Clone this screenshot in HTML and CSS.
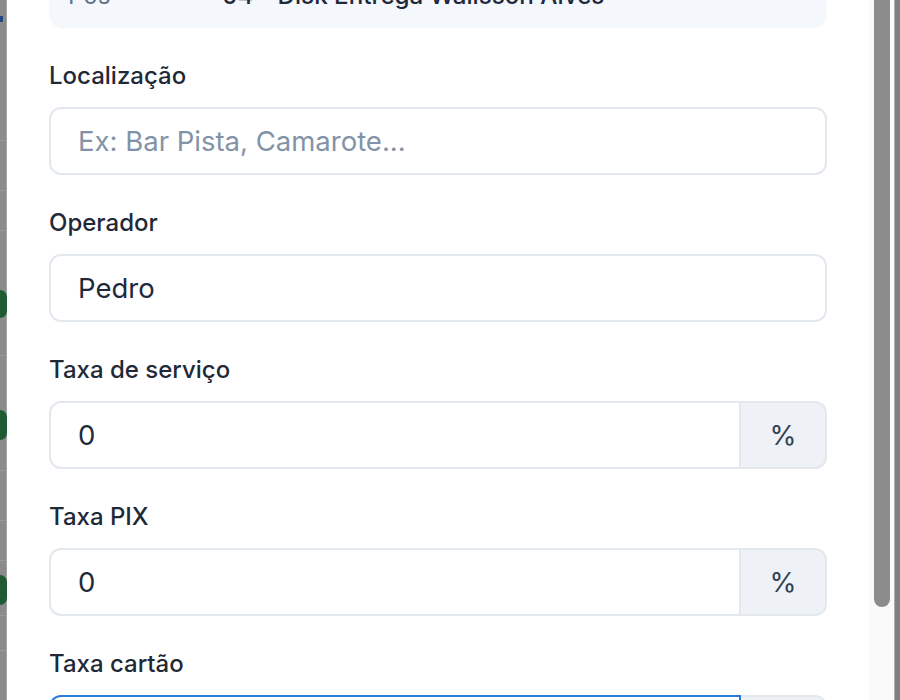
FILE: index.html
```html
<!DOCTYPE html>
<html lang="pt-BR">
<head>
<meta charset="utf-8">
<title>Configurar PDV</title>
<link rel="stylesheet" href="styles.css">
</head>
<body>
  <div class="backdrop-left">
    <span class="bd-dot"></span>
    <span class="bd-line l1"></span>
    <span class="bd-line l2"></span>
    <span class="bd-line l3"></span>
    <span class="bd-blob b1"></span>
    <span class="bd-line l4"></span>
    <span class="bd-blob b2"></span>
    <span class="bd-line l5"></span>
    <span class="bd-line l6"></span>
    <span class="bd-line l7"></span>
    <span class="bd-blob b3"></span>
    <span class="bd-line l8"></span>
    <span class="bd-line l9"></span>
  </div>
  <div class="modal">
    <div class="modal-body">
      <div class="info-box">
        <span class="info-key">Pos</span>
        <span class="info-value">04 - Disk Entrega Walisson Alves</span>
      </div>

      <div class="field">
        <label class="label" for="loc">Localização</label>
        <input class="input" id="loc" type="text" placeholder="Ex: Bar Pista, Camarote...">
      </div>

      <div class="field">
        <label class="label" for="op">Operador</label>
        <input class="input" id="op" type="text" value="Pedro">
      </div>

      <div class="field">
        <label class="label" for="ts">Taxa de serviço</label>
        <div class="group">
          <input class="input input-grouped" id="ts" type="text" value="0">
          <span class="addon">%</span>
        </div>
      </div>

      <div class="field">
        <label class="label" for="tp">Taxa PIX</label>
        <div class="group">
          <input class="input input-grouped" id="tp" type="text" value="0">
          <span class="addon">%</span>
        </div>
      </div>

      <div class="field">
        <label class="label" for="tc">Taxa cartão</label>
        <div class="group">
          <input class="input input-grouped input-focus" id="tc" type="text" value="0">
          <span class="addon">%</span>
        </div>
      </div>
    </div>
    <div class="scroll-track">
      <div class="scroll-thumb"></div>
    </div>
  </div>
  <div class="backdrop-right"></div>
</body>
</html>
```

FILE: styles.css
```css
html, body {
  margin: 0;
  padding: 0;
  height: 700px;
  overflow: hidden;
}

body {
  display: flex;
  font-family: Inter, "Noto Sans", "Liberation Sans", sans-serif;
  background: #8a8a8a;
}

.backdrop-left {
  width: 7px;
  flex: none;
  display: flex;
  flex-direction: column;
  background: #8b8b8b;
  border-right: 1px solid #a3a3a3;
  box-sizing: border-box;
}

.bd-dot {
  display: block;
  width: 3px;
  height: 6px;
  margin-top: 16px;
  background: #23487a;
}

.bd-line {
  display: block;
  height: 1px;
  background: #9a9a9a;
}

.l1 { margin-top: 118px; }
.l2 { margin-top: 49px; }
.l3 { margin-top: 39px; }
.l4 { margin-top: 37px; }
.l5 { margin-top: 30px; }
.l6 { margin-top: 49px; }
.l7 { margin-top: 39px; }
.l8 { margin-top: 10px; }
.l9 { margin-top: 34px; }

.bd-blob {
  display: block;
  width: 7px;
  height: 28px;
  background: #1f5a33;
  border-radius: 0 8px 8px 0;
}

.b1 { margin-top: 59px; }
.b2 { margin-top: 54px; height: 30px; }
.b3 { margin-top: 14px; height: 30px; }

.modal {
  flex: 1;
  display: flex;
  background: #ffffff;
}

.modal-body {
  flex: 1;
  padding: 0 42px;
}

.info-box {
  margin-top: -32px;
  height: 60px;
  box-sizing: border-box;
  padding: 0 19px 4px;
  background: #f4f7fb;
  border-radius: 0 0 14px 14px;
  display: flex;
  align-items: center;
  font-size: 24.2px;
  line-height: 36px;
}

.info-key {
  width: 154px;
  color: #64748b;
}

.info-value {
  color: #1e293b;
  font-weight: 500;
}

.field {
  margin-top: 32px;
}

.label {
  display: block;
  font-size: 24px;
  font-weight: 500;
  line-height: 32px;
  color: #1f2937;
  margin-bottom: 15px;
}

.input {
  display: block;
  width: 100%;
  height: 68px;
  box-sizing: border-box;
  border: 2px solid #e3e8ef;
  border-radius: 12px;
  padding: 0 27px;
  font-family: inherit;
  font-size: 27.5px;
  color: #1e293b;
  background: #ffffff;
  outline: none;
}

.input::placeholder {
  color: #8393a7;
}

.group {
  display: flex;
  height: 68px;
}

.input-grouped {
  flex: 1;
  width: auto;
  min-width: 0;
  border-radius: 12px 0 0 12px;
}

.input-focus {
  border-color: #2f7bd9;
}

.addon {
  width: 86px;
  box-sizing: border-box;
  display: flex;
  align-items: center;
  justify-content: center;
  background: #eef2f6;
  border: 2px solid #e3e8ef;
  border-left: none;
  border-radius: 0 12px 12px 0;
  font-size: 27.5px;
  color: #334155;
}

.scroll-track {
  width: 25px;
  flex: none;
  background: #fafafa;
  display: flex;
  justify-content: center;
}

.scroll-thumb {
  width: 16px;
  height: 607px;
  background: #8c8c8c;
  border-radius: 0 0 8px 8px;
}

.backdrop-right {
  width: 6px;
  flex: none;
  background: #808080;
  border-left: 1px solid #b0b0b0;
  box-sizing: border-box;
}
```
